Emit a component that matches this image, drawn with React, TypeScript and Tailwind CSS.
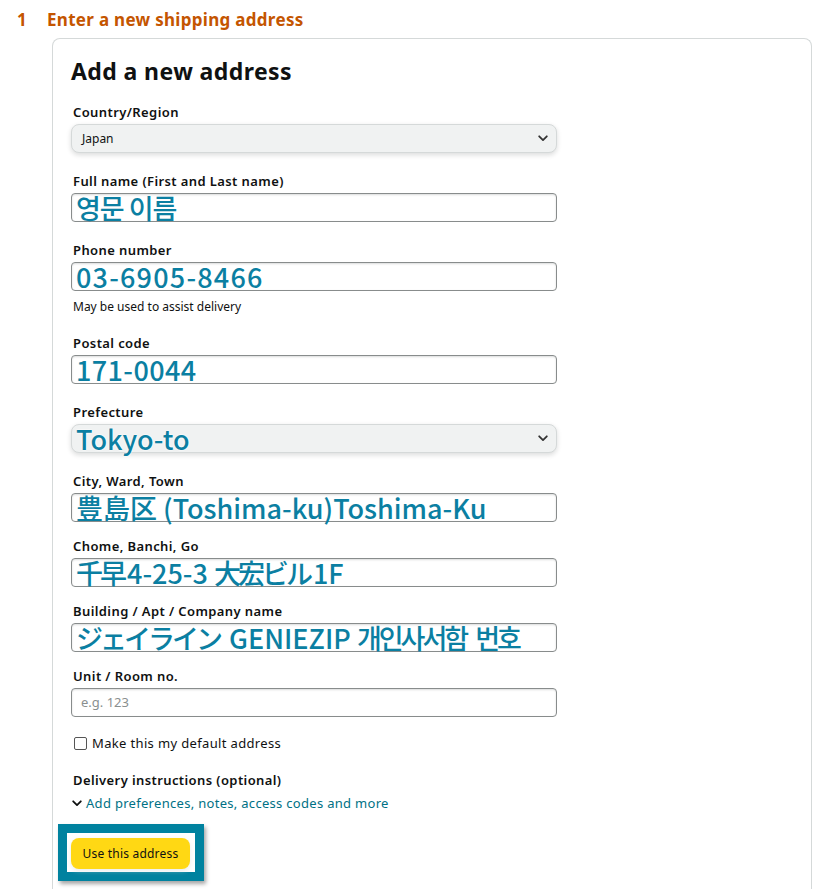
import React from 'react';

const FONT = { fontFamily: '"Noto Sans", "Noto Sans CJK KR", sans-serif' };
const CJK = { fontFamily: '"Noto Sans CJK KR", "Noto Sans CJK JP", sans-serif' };

const Label = ({ children }: { children: React.ReactNode }) => (
  <div className="text-[13px] font-semibold leading-[19px] tracking-[0.4px] text-[#0f1111] mb-[2px] ml-[2px]">{children}</div>
);

const Filled = ({ children, className = '' }: { children: React.ReactNode; className?: string }) => (
  <div className="h-[29px] rounded-[4px] border border-[#888c8c] bg-white px-[4px] flex items-center shadow-[inset_0_1px_2px_rgba(15,17,17,0.15)]">
    <span className={`text-[27px] font-medium leading-none text-[#0b7fa2] whitespace-nowrap ${className}`} style={CJK}>
      {children}
    </span>
  </div>
);

// narrower kana / hangul like the source font
const Narrow = ({ children, end = true }: { children: React.ReactNode; end?: boolean }) => (
  <span className={end ? 'tracking-[-3px] mr-[3px]' : 'tracking-[-3px]'}>{children}</span>
);

const Chevron = ({ className }: { className?: string }) => (
  <svg className={className} width="10" height="7" viewBox="0 0 10 7" fill="none">
    <path d="M1.2 1.3L5 5.1l3.8-3.8" stroke="currentColor" strokeWidth="1.8" strokeLinecap="round" strokeLinejoin="round" />
  </svg>
);

export default function App() {
  return (
    <div className="min-h-screen bg-white pt-[9px] pl-[17px] text-[#0f1111] overflow-hidden" style={FONT}>
      <div className="flex items-center h-[22px] text-[17px] font-bold tracking-[0.3px] text-[#c45500]">
        <span className="w-[30px]">1</span>
        <span>Enter a new shipping address</span>
      </div>
      <div className="mt-[7px] ml-[35px] w-[760px] rounded-t-[8px] border border-[#d5d9d9] border-b-0 pl-[18px] pt-[17px] pb-[60px]">
        <h1 className="text-[23px] font-bold leading-[30px] tracking-[0.4px] mb-[17px]">Add a new address</h1>
        <div className="w-[486px]">
          <Label>Country/Region</Label>
          <div className="h-[29px] rounded-[8px] border border-[#d5d9d9] bg-[#f0f2f2] shadow-[0_2px_5px_rgba(15,17,17,0.15)] pl-[10px] pr-[8px] flex items-center justify-between">
            <span className="text-[12px]">Japan</span>
            <Chevron className="text-[#333]" />
          </div>

          <div className="mt-[19px]">
            <Label>Full name (First and Last name)</Label>
            <Filled className="tracking-[-1px]">영문 이름</Filled>
          </div>

          <div className="mt-[19px]">
            <Label>Phone number</Label>
            <Filled className="tracking-[1.2px]">03-6905-8466</Filled>
            <div className="mt-[8px] ml-[2px] text-[12px] leading-[16px]">May be used to assist delivery</div>
          </div>

          <div className="mt-[19px]">
            <Label>Postal code</Label>
            <Filled className="tracking-[0.4px]">171-0044</Filled>
          </div>

          <div className="mt-[19px]">
            <Label>Prefecture</Label>
            <div className="h-[29px] rounded-[8px] border border-[#d5d9d9] bg-[#f0f2f2] shadow-[0_2px_5px_rgba(15,17,17,0.15)] pl-[4px] pr-[8px] flex items-center justify-between">
              <span
                className="text-[27px] font-medium leading-none text-[#0b7fa2] whitespace-nowrap [text-shadow:0_0_2px_#fff,0_0_2px_#fff]"
                style={CJK}
              >
                Tokyo-to
              </span>
              <Chevron className="text-[#333]" />
            </div>
          </div>

          <div className="mt-[19px]">
            <Label>City, Ward, Town</Label>
            <Filled>豊島区 (Toshima-ku)Toshima-Ku</Filled>
          </div>

          <div className="mt-[15px]">
            <Label>Chome, Banchi, Go</Label>
            <Filled>
              <Narrow>千早</Narrow>4-25-3 <Narrow>大宏ビル</Narrow>1F
            </Filled>
          </div>

          <div className="mt-[15px]">
            <Label>Building / Apt / Company name</Label>
            <Filled>
              <Narrow>ジェイライン</Narrow> GENIEZIP <Narrow>개인사서함</Narrow> <Narrow>번호</Narrow>
            </Filled>
          </div>

          <div className="mt-[15px]">
            <Label>Unit / Room no.</Label>
            <div className="h-[29px] rounded-[4px] border border-[#888c8c] bg-white px-[9px] flex items-center shadow-[inset_0_1px_2px_rgba(15,17,17,0.15)]">
              <span className="text-[13px] text-[#8a8f8f]">e.g. 123</span>
            </div>
          </div>

          <label className="mt-[17px] flex items-center h-[19px] text-[13px] tracking-[0.35px]">
            <span className="w-[13px] h-[13px] rounded-[2px] border border-[#555] bg-white mr-[5px] ml-[3px]" />
            Make this my default address
          </label>

          <div className="mt-[18px] ml-[2px] text-[13px] font-semibold leading-[19px] tracking-[0.4px]">
            Delivery instructions (optional)
          </div>
          <div className="mt-[4px] ml-[1px] flex items-center h-[19px] text-[13px] tracking-[0.3px] text-[#007185]">
            <Chevron className="text-[#0f1111] mr-[4px]" />
            Add preferences, notes, access codes and more
          </div>

          <div className="mt-[25px] relative inline-block">
            <div className="absolute -left-[13px] -top-[14px] w-[146px] h-[57px] border-[9px] border-[#00829f] shadow-[2px_3px_4px_rgba(0,0,0,0.35)]" />
            <button className="relative h-[31px] w-[119px] rounded-[8px] bg-[#ffd814] text-[12px] tracking-[0.2px] text-[#0f1111] shadow-[0_2px_5px_rgba(213,217,217,0.5)]">
              Use this address
            </button>
          </div>
        </div>
      </div>
    </div>
  );
}
